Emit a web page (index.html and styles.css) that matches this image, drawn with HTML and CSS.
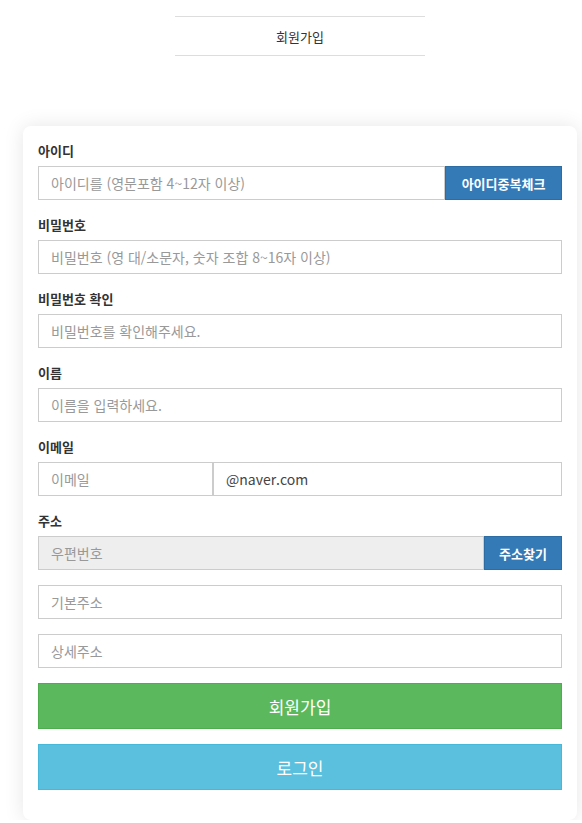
FILE: index.html
```html
<!DOCTYPE html>
<html lang="ko">
<head>
<meta charset="utf-8">
<title>회원가입</title>
<link rel="stylesheet" href="styles.css">
</head>
<body>
<div class="page">
  <header class="title-bar">
    <h1 class="title">회원가입</h1>
  </header>
  <form class="card">
    <div class="group">
      <label class="label">아이디</label>
      <div class="row">
        <input class="input grow" type="text" placeholder="아이디를 (영문포함 4~12자 이상)">
        <button type="button" class="btn-side btn-blue btn-id">아이디중복체크</button>
      </div>
    </div>
    <div class="group">
      <label class="label">비밀번호</label>
      <input class="input" type="password" placeholder="비밀번호 (영 대/소문자, 숫자 조합 8~16자 이상)">
    </div>
    <div class="group">
      <label class="label">비밀번호 확인</label>
      <input class="input" type="password" placeholder="비밀번호를 확인해주세요.">
    </div>
    <div class="group">
      <label class="label">이름</label>
      <input class="input" type="text" placeholder="이름을 입력하세요.">
    </div>
    <div class="group">
      <label class="label">이메일</label>
      <div class="row">
        <input class="input email-id" type="text" placeholder="이메일">
        <input class="input email-domain" type="text" value="@naver.com">
      </div>
    </div>
    <div class="group">
      <label class="label">주소</label>
      <div class="row">
        <input class="input grow readonly" type="text" placeholder="우편번호" readonly>
        <button type="button" class="btn-side btn-blue btn-zip">주소찾기</button>
      </div>
    </div>
    <div class="group">
      <input class="input" type="text" placeholder="기본주소">
    </div>
    <div class="group">
      <input class="input" type="text" placeholder="상세주소">
    </div>
    <button type="button" class="btn-big btn-green">회원가입</button>
    <button type="button" class="btn-big btn-sky">로그인</button>
  </form>
</div>
</body>
</html>
```

FILE: styles.css
```css
html, body {
  margin: 0;
  padding: 0;
  background: #fff;
  overflow: hidden;
}
body {
  font-family: "Noto Sans CJK KR", "Noto Sans", sans-serif;
  color: #333;
}
.page {
  width: 600px;
  display: flex;
  flex-direction: column;
  align-items: center;
}
.title-bar {
  margin-top: 16px;
  width: 250px;
  height: 38px;
  border-top: 1px solid #ddd;
  border-bottom: 1px solid #ddd;
  display: flex;
  align-items: center;
  justify-content: center;
}
.title {
  margin: 0;
  font-size: 13px;
  font-weight: normal;
  color: #333;
  line-height: 1;
}
.card {
  margin-top: 70px;
  width: 554px;
  box-sizing: border-box;
  padding: 15px 15px 15px;
  background: #fff;
  border-radius: 8px;
  box-shadow: 0 0 20px rgba(0, 0, 0, 0.1);
  display: flex;
  flex-direction: column;
}
.group {
  display: flex;
  flex-direction: column;
  margin-bottom: 15px;
}
.label {
  display: block;
  font-size: 13px;
  font-weight: bold;
  line-height: 20px;
  height: 20px;
  margin-bottom: 5px;
  color: #333;
}
.row {
  display: flex;
}
.input {
  box-sizing: border-box;
  height: 34px;
  width: 100%;
  margin: 0;
  padding: 0 12px;
  border: 1px solid #ccc;
  border-radius: 0;
  font-family: inherit;
  font-size: 14px;
  color: #444;
  background: #fff;
  outline: none;
}
.input::placeholder {
  color: #999;
}
.grow {
  flex: 1;
  width: auto;
  min-width: 0;
}
.readonly {
  background: #eee;
}
.email-id {
  width: 175px;
  flex: none;
}
.email-domain {
  flex: 1;
  width: auto;
  min-width: 0;
  border-left: 2px solid #ccc;
  margin-left: -1px;
}
.btn-side {
  box-sizing: border-box;
  height: 34px;
  margin: 0;
  border-radius: 0;
  font-family: inherit;
  font-size: 13px;
  font-weight: bold;
  color: #fff;
  cursor: pointer;
  padding: 0;
}
.btn-blue {
  background: #337ab7;
  border: 1px solid #2e6da4;
}
.btn-id {
  width: 117px;
}
.btn-zip {
  width: 78px;
}
.btn-big {
  box-sizing: border-box;
  height: 46px;
  width: 100%;
  margin: 0 0 15px;
  border-radius: 0;
  font-family: inherit;
  font-size: 17px;
  color: #fff;
  cursor: pointer;
  padding: 0;
}
.btn-green {
  background: #5cb85c;
  border: 1px solid #4cae4c;
}
.btn-sky {
  background: #5bc0de;
  border: 1px solid #46b8da;
}
```
